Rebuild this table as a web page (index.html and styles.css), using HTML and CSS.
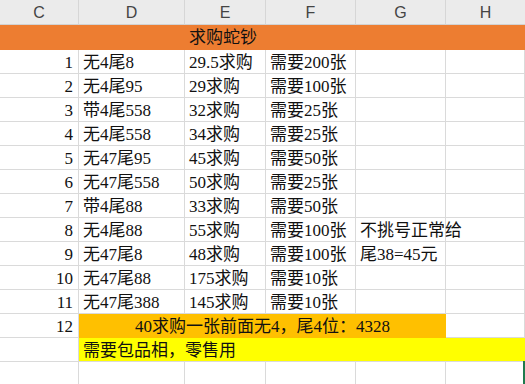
FILE: index.html
```html
<!DOCTYPE html>
<html>
<head>
<meta charset="utf-8">
<link rel="stylesheet" href="styles.css">
</head>
<body>
<div class="sheet">
  <div class="hd">C</div><div class="hd">D</div><div class="hd">E</div><div class="hd">F</div><div class="hd">G</div><div class="hd last">H</div>

  <div class="title span5">求购蛇钞</div><div class="title-end"></div>

  <div class="c num">1</div><div class="c">无4尾8</div><div class="c">29.5求购</div><div class="c">需要200张</div><div class="c"></div><div class="c"></div>
  <div class="c num">2</div><div class="c">无4尾95</div><div class="c">29求购</div><div class="c">需要100张</div><div class="c"></div><div class="c"></div>
  <div class="c num">3</div><div class="c">带4尾558</div><div class="c">32求购</div><div class="c">需要25张</div><div class="c"></div><div class="c"></div>
  <div class="c num">4</div><div class="c">无4尾558</div><div class="c">34求购</div><div class="c">需要25张</div><div class="c"></div><div class="c"></div>
  <div class="c num">5</div><div class="c">无47尾95</div><div class="c">45求购</div><div class="c">需要50张</div><div class="c"></div><div class="c"></div>
  <div class="c num">6</div><div class="c">无47尾558</div><div class="c">50求购</div><div class="c">需要25张</div><div class="c"></div><div class="c"></div>
  <div class="c num">7</div><div class="c">带4尾88</div><div class="c">33求购</div><div class="c">需要50张</div><div class="c"></div><div class="c"></div>
  <div class="c num">8</div><div class="c">无4尾88</div><div class="c">55求购</div><div class="c">需要100张</div><div class="c">不挑号正常给</div><div class="c"></div>
  <div class="c num">9</div><div class="c">无47尾8</div><div class="c">48求购</div><div class="c">需要100张</div><div class="c">尾38=45元</div><div class="c"></div>
  <div class="c num">10</div><div class="c">无47尾88</div><div class="c">175求购</div><div class="c">需要10张</div><div class="c"></div><div class="c"></div>
  <div class="c num">11</div><div class="c">无47尾388</div><div class="c">145求购</div><div class="c">需要10张</div><div class="c"></div><div class="c"></div>
  <div class="c num">12</div><div class="c amber span4">40求购一张前面无4，尾4位：4328</div><div class="c"></div>
  <div class="c"></div><div class="c yellow span5">需要包品相，零售用</div>
  <div class="c"></div><div class="c"></div><div class="c"></div><div class="c"></div><div class="c"></div><div class="c sel"></div>
</div>
</body>
</html>
```

FILE: styles.css
```css
html, body {
  margin: 0;
  padding: 0;
  background: #fff;
  overflow: hidden;
  width: 525px;
  height: 384px;
}

.sheet {
  display: grid;
  grid-template-columns: 79px 106px 81px 90px 90px 79px;
  grid-template-rows: 25px 25px repeat(14, 24px);
  font-family: "Liberation Serif", "Noto Sans CJK SC", serif;
  font-size: 17px;
  color: #111;
}

.hd {
  background: #ebebeb;
  border-right: 1px solid #d6d6d6;
  border-bottom: 1px solid #d2d2d2;
  box-sizing: border-box;
  font-family: "Liberation Sans", "Noto Sans", sans-serif;
  font-size: 16px;
  color: #444;
  text-align: center;
  line-height: 25px;
}

.hd.last {
  border-right: none;
}

.title {
  background: #ed7d31;
  text-align: center;
  line-height: 26px;
  white-space: nowrap;
}

.title-end {
  background: #ed7d31;
}

.span5 {
  grid-column: span 5;
}

.span4 {
  grid-column: span 4;
}

.c {
  box-sizing: border-box;
  border-right: 1px solid #dadada;
  border-bottom: 1px solid #dadada;
  padding: 1px 4px 0;
  line-height: 23px;
  white-space: nowrap;
  overflow: visible;
}

.num {
  text-align: right;
  padding-right: 5px;
}

.amber {
  background: #ffc000;
  text-align: center;
  border-right: none;
  border-bottom: none;
}

.yellow {
  background: #ffff00;
  border-right: none;
}

.sel {
  position: relative;
}

.sel::after {
  content: "";
  position: absolute;
  right: -1px;
  top: -1px;
  width: 2px;
  height: 26px;
  background: #1f7a4d;
}
```
